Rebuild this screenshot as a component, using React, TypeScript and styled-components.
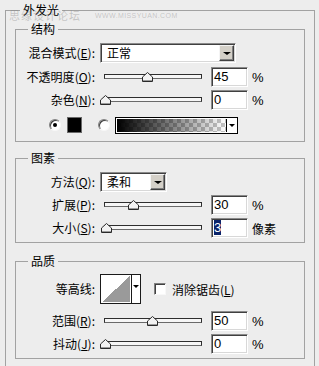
import styled, { createGlobalStyle } from "styled-components"

const GlobalStyle = createGlobalStyle`
  html, body {
    margin: 0;
    padding: 0;
    background: #ededed;
  }
  body {
    font-family: "Noto Sans CJK SC", "Noto Sans", sans-serif;
    font-size: 12px;
    color: #000;
  }
`

const Page = styled.div`
  position: relative;
  width: 319px;
  height: 366px;
  overflow: hidden;
  padding-top: 3px;
  box-sizing: border-box;
`

const Watermark = styled.div`
  position: absolute;
  top: 7px;
  left: 9px;
  display: flex;
  align-items: center;
  gap: 14px;
  color: rgba(120, 120, 120, 0.35);
  pointer-events: none;
  white-space: nowrap;

  > #cn {
    font-size: 11px;
    letter-spacing: 1px;
  }

  > #en {
    font-family: "Liberation Sans", sans-serif;
    font-size: 7px;
    letter-spacing: 0.4px;
  }
`

const OuterGroup = styled.fieldset`
  margin: 0 0 0 5px;
  width: 310px;
  height: 370px;
  box-sizing: border-box;
  border: 1px solid #a2a2a2;
  padding: 0 9px;
`

const Legend = styled.legend<{ $offset: number }>`
  margin-left: ${(p) => p.$offset}px;
  padding: 0 3px;
  line-height: 14px;
  font-size: 12px;
`

const Group = styled.fieldset<{ $top: number; $bottom: number }>`
  margin: ${(p) => p.$top}px 0 0 0;
  width: 290px;
  box-sizing: border-box;
  border: 1px solid #a2a2a2;
  padding: 0 0 ${(p) => p.$bottom}px 0;
  min-width: 0;
`

const Row = styled.div<{ $top: number; $height?: number; $indent?: number }>`
  display: flex;
  align-items: center;
  height: ${(p) => p.$height ?? 20}px;
  margin-top: ${(p) => p.$top}px;
  padding-left: ${(p) => p.$indent ?? 0}px;
`

const Label = styled.div`
  width: 79px;
  flex-shrink: 0;
  text-align: right;
  white-space: nowrap;
  margin-right: 5px;
  line-height: 14px;

  > u {
    text-decoration: underline;
    text-underline-offset: 1px;
  }
`

const Select = styled.div<{ $width: number }>`
  display: flex;
  align-items: center;
  width: ${(p) => p.$width}px;
  height: 20px;
  box-sizing: border-box;
  background: #fff;
  border: 1px solid;
  border-color: #8a8a8a #fff #fff #8a8a8a;
  box-shadow: inset 1px 1px 0 #404040, inset -1px -1px 0 #d8d8d8;
  padding: 1px;

  > #text {
    flex: 1;
    padding-left: 5px;
    line-height: 16px;
  }
`

const DropButton = styled.div`
  width: 15px;
  height: 16px;
  box-sizing: border-box;
  background: #d4d0c8;
  border: 1px solid;
  border-color: #f4f4f4 #404040 #404040 #f4f4f4;
  box-shadow: inset -1px -1px 0 #808080;
  display: flex;
  align-items: center;
  justify-content: center;
`

const Triangle = styled.div<{ $size: number }>`
  width: 0;
  height: 0;
  border-left: ${(p) => p.$size}px solid transparent;
  border-right: ${(p) => p.$size}px solid transparent;
  border-top: ${(p) => Math.ceil(p.$size * 0.75)}px solid #000;
`

const SliderBox = styled.div`
  position: relative;
  width: 111px;
  height: 20px;
  flex-shrink: 0;
`

const Track = styled.div`
  position: absolute;
  left: 4px;
  top: 7px;
  width: 98px;
  height: 5px;
  box-sizing: border-box;
  border: 1px solid #2e2e2e;
  border-bottom-color: #6a6a6a;
  background: #f6f6f6;
`

const Thumb = styled.svg`
  position: absolute;
  top: 5px;
  width: 11px;
  height: 10px;
`

const NumberBox = styled.div<{ $selected?: boolean }>`
  width: 37px;
  height: 20px;
  box-sizing: border-box;
  background: #fff;
  border: 1px solid;
  border-color: #8a8a8a #fff #fff #8a8a8a;
  box-shadow: inset 1px 1px 0 #404040, inset -1px -1px 0 #d8d8d8;
  padding: 1px 0 0 2px;
  font-family: "Liberation Sans", Arial, sans-serif;
  font-size: 13px;
  line-height: 16px;

  > span {
    background: ${(p) => (p.$selected ? "#0a246a" : "transparent")};
    color: ${(p) => (p.$selected ? "#fff" : "#000")};
  }
`

const Unit = styled.div<{ $cjk?: boolean }>`
  margin-left: 4px;
  font-family: ${(p) => (p.$cjk ? `"Noto Sans CJK SC", sans-serif` : `"Liberation Sans", Arial, sans-serif`)};
  font-size: ${(p) => (p.$cjk ? 12 : 13)}px;
`

const Radio = styled.div<{ $checked?: boolean }>`
  width: 12px;
  height: 12px;
  box-sizing: border-box;
  border-radius: 50%;
  border: 1px solid;
  border-color: #808080 #f8f8f8 #f8f8f8 #808080;
  background: #fff;
  box-shadow: inset 1px 1px 0 #404040;
  display: flex;
  align-items: center;
  justify-content: center;
  flex: none;

  &::after {
    content: "";
    width: 4px;
    height: 4px;
    border-radius: 50%;
    background: ${(p) => (p.$checked ? "#000" : "transparent")};
  }
`

const Swatch = styled.div`
  flex: none;
  width: 15px;
  height: 16px;
  margin-left: 6px;
  margin-right: 16px;
  box-sizing: border-box;
  background: #000;
  border: 1px solid #6a6a6a;
  box-shadow: inset 0 0 0 1px #000;
`

const GradientBox = styled.div`
  flex: none;
  display: grid;
  grid-template-columns: 1fr 11px;
  width: 123px;
  height: 17px;
  margin-left: 5px;
  box-sizing: border-box;
  border: 1px solid #000;
  box-shadow: inset 0 0 0 1px #fff;
  padding: 1px 0 1px 1px;
  background: #fff;

  > #ramp {
    background: linear-gradient(to right, #000, rgba(0, 0, 0, 0)),
      repeating-conic-gradient(#c6c6c6 0 25%, #fff 0 50%) 0 0 / 8px 8px;
  }

  > #arrow {
    border-left: 1px solid #000;
    background: #fff;
    display: flex;
    align-items: center;
    justify-content: center;
  }
`

const ContourPicker = styled.div`
  display: flex;
  width: 41px;
  height: 30px;
  box-sizing: border-box;
  border: 1px solid #1a1a1a;
  background: #fff;

  > #preview {
    width: 28px;
    margin: 1px;
    background: linear-gradient(to bottom right, #fff 50%, #9a9a9a 50%);
  }

  > #arrow {
    flex: 1;
    border-left: 1px solid #1a1a1a;
    display: flex;
    justify-content: center;
    padding-top: 10px;
    box-sizing: border-box;
  }
`

const CheckBox = styled.div`
  width: 12px;
  height: 12px;
  margin-left: 13px;
  margin-right: 6px;
  box-sizing: border-box;
  border: 1px solid;
  border-color: #808080 #f8f8f8 #f8f8f8 #808080;
  box-shadow: inset 1px 1px 0 #404040;
  background: #fff;
`

const Slider = ({ value }: { value: number }) => {
  const left = 5 + 0.95 * value - 5.5
  return (
    <SliderBox>
      <Track />
      <Thumb viewBox="0 0 11 10" style={{ left }}>
        <polygon points="0.5,9.5 0.5,5 5.5,0.5 10.5,5 10.5,9.5" fill="#f2f2f2" stroke="#2a2a2a" />
        <line x1="1" y1="8.5" x2="10" y2="8.5" stroke="#9a9a9a" />
      </Thumb>
    </SliderBox>
  )
}

type SliderRowProps = {
  label: string
  mnemonic?: string
  value: string
  pos: number
  unit: string
  top: number
  selected?: boolean
}

const SliderRow = ({ label, mnemonic, value, pos, unit, top, selected }: SliderRowProps) => (
  <Row $top={top}>
    <Label>
      {label}
      {mnemonic && (
        <>
          (<u>{mnemonic}</u>)
        </>
      )}
      :
    </Label>
    <Slider value={pos} />
    <NumberBox $selected={selected}>
      <span>{value}</span>
    </NumberBox>
    <Unit $cjk={unit !== "%"}>{unit}</Unit>
  </Row>
)

export default function App() {
  return (
    <>
      <GlobalStyle />
      <Page>
        <OuterGroup>
          <Legend $offset={5}>外发光</Legend>

          <Group $top={5} $bottom={6}>
            <Legend $offset={12}>结构</Legend>
            <Row $top={7}>
              <Label>
                混合模式(<u>E</u>):
              </Label>
              <Select $width={136}>
                <div id="text">正常</div>
                <DropButton>
                  <Triangle $size={4} />
                </DropButton>
              </Select>
            </Row>
            <SliderRow top={4} label="不透明度" mnemonic="O" value="45" pos={45} unit="%" />
            <SliderRow top={3} label="杂色" mnemonic="N" value="0" pos={0} unit="%" />
            <Row $top={5} $indent={33}>
              <Radio $checked />
              <Swatch />
              <Radio />
              <GradientBox>
                <div id="ramp" />
                <div id="arrow">
                  <Triangle $size={3} />
                </div>
              </GradientBox>
            </Row>
          </Group>

          <Group $top={9} $bottom={4}>
            <Legend $offset={12}>图素</Legend>
            <Row $top={7}>
              <Label>
                方法(<u>Q</u>):
              </Label>
              <Select $width={67}>
                <div id="text">柔和</div>
                <DropButton>
                  <Triangle $size={4} />
                </DropButton>
              </Select>
            </Row>
            <SliderRow top={3} label="扩展" mnemonic="P" value="30" pos={30} unit="%" />
            <SliderRow top={3} label="大小" mnemonic="S" value="3" pos={1.2} unit="像素" selected />
          </Group>

          <Group $top={11} $bottom={4}>
            <Legend $offset={12}>品质</Legend>
            <Row $top={6} $height={30}>
              <Label>等高线:</Label>
              <ContourPicker>
                <div id="preview" />
                <div id="arrow">
                  <Triangle $size={3} />
                </div>
              </ContourPicker>
              <CheckBox />
              <span>
                消除锯齿(<u>L</u>)
              </span>
            </Row>
            <SliderRow top={7} label="范围" mnemonic="R" value="50" pos={50} unit="%" />
            <SliderRow top={3} label="抖动" mnemonic="J" value="0" pos={0} unit="%" />
          </Group>
        </OuterGroup>
        <Watermark>
          <span id="cn">思缘设计论坛</span>
          <span id="en">WWW.MISSYUAN.COM</span>
        </Watermark>
      </Page>
    </>
  )
}
